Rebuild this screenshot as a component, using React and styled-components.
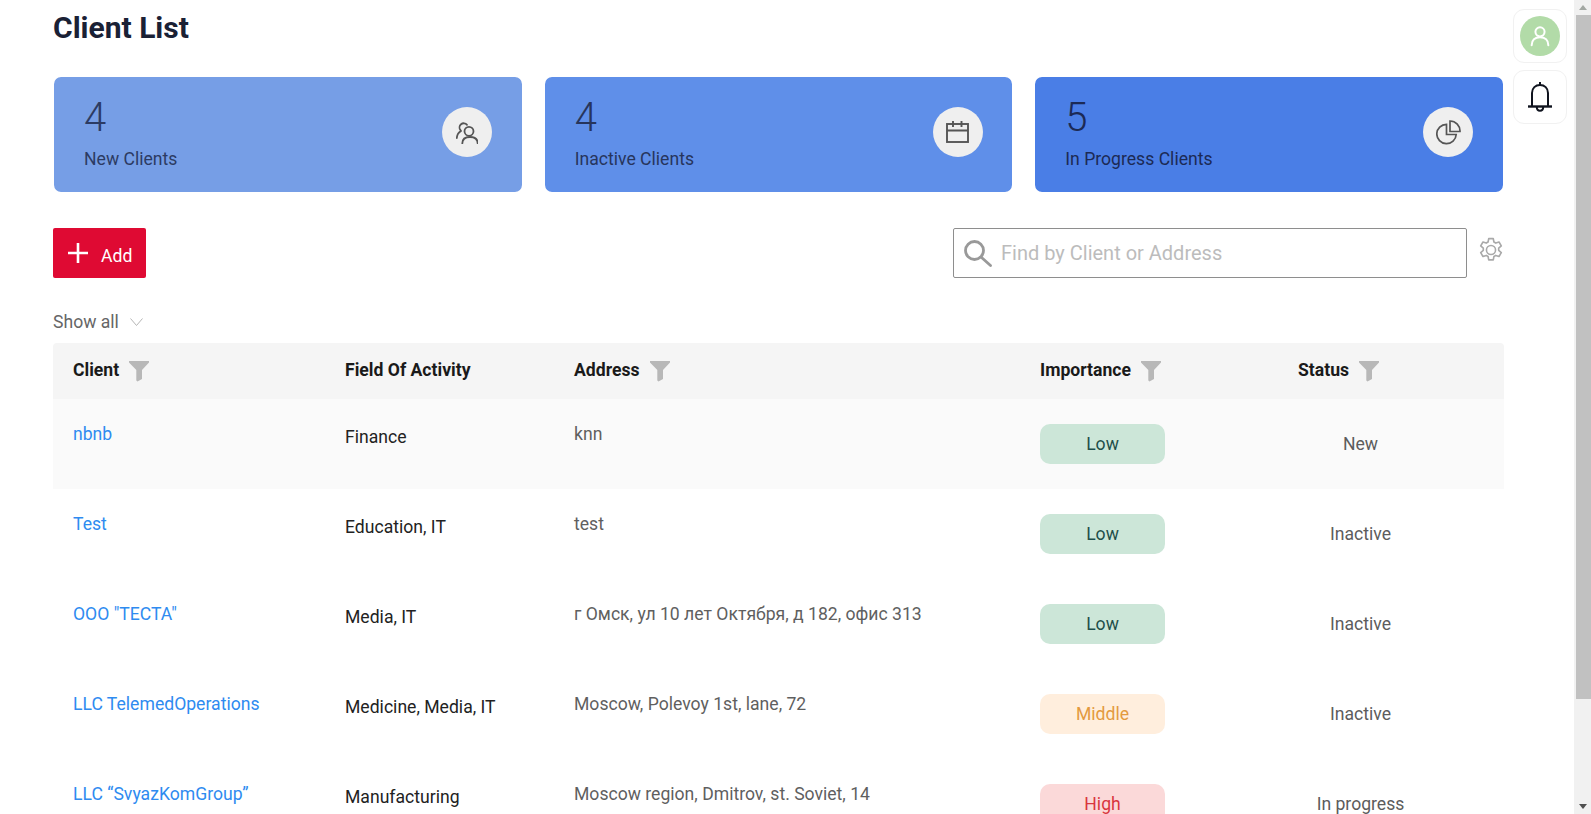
import React from 'react'
import styled, { createGlobalStyle } from 'styled-components'

const GlobalStyle = createGlobalStyle`
    html, body {
        margin: 0;
        background: #fff;
        font-family: Roboto, "Noto Sans CJK SC", sans-serif;
    }
`

const Shell = styled.div`
    position: relative;
    display: flex;
    height: 100vh;
    overflow: hidden;
`

const Page = styled.div`
    flex: 1;
    min-width: 0;
    padding: 10px 70px 0 53px;
`

const ScrollBar = styled.div`
    display: flex;
    flex-direction: column;
    width: 17px;
    background: #f1f1f1;
`

const ScrollArrow = styled.div`
    display: flex;
    align-items: center;
    justify-content: center;
    height: 15px;
    flex: none;
    &::before {
        content: '';
        border-left: 4.5px solid transparent;
        border-right: 4.5px solid transparent;
        border-${p => (p.$down ? 'top' : 'bottom')}: 5px solid ${p => (p.$down ? '#505050' : '#a3a8a3')};
    }
`

const ScrollTrack = styled.div`
    flex: 1;
    display: flex;
    justify-content: flex-end;
    align-items: flex-start;
`

const ScrollThumb = styled.div`
    width: 15px;
    height: 684px;
    background: #c1c1c1;
`

const Title = styled.h1`
    margin: 0;
    font-size: 30px;
    line-height: 36px;
    font-weight: 700;
    color: #1a2135;
`

const Cards = styled.div`
    display: grid;
    grid-template-columns: repeat(3, 1fr);
    gap: 21px;
    margin-top: 30px;
`

const Card = styled.div`
    display: flex;
    justify-content: space-between;
    align-items: center;
    height: 117px;
    padding: 0 29.5px 5px 30px;
    box-sizing: border-box;
    border: 1px solid rgba(255, 255, 255, 0.25);
    border-radius: 8px;
    background: ${p => p.$bg};
    background-clip: padding-box;
`

const CardText = styled.div`
    display: flex;
    flex-direction: column;
    color: ${p => p.$color};
`

const CardNumber = styled.div`
    font-size: 40px;
    line-height: 47px;
    font-weight: 300;
`

const CardLabel = styled.div`
    margin-top: 6px;
    font-size: 17.6px;
    line-height: 24px;
`

const CardIcon = styled.div`
    display: flex;
    align-items: center;
    justify-content: center;
    width: 50px;
    height: 50px;
    border-radius: 50%;
    background: #efefef;
    color: #555;
`

const Toolbar = styled.div`
    display: flex;
    justify-content: space-between;
    align-items: flex-start;
    margin-top: 35px;
`

const AddButton = styled.button`
    display: flex;
    align-items: center;
    gap: 13px;
    width: 93px;
    height: 50px;
    padding: 0 0 0 15px;
    border: 0;
    border-radius: 2px;
    background: #df0a33;
    color: #fff;
    font: 400 17.6px Roboto, sans-serif;
`

const AddLabel = styled.span`
    padding-top: 5px;
`

const SearchArea = styled.div`
    display: flex;
    align-items: flex-start;
    gap: 11px;
`

const SearchBox = styled.label`
    display: flex;
    align-items: center;
    gap: 9px;
    width: 514px;
    height: 50px;
    padding: 0 10px;
    box-sizing: border-box;
    border: 1px solid #8e8e8e;
    border-radius: 2px;
    color: #999;
`

const SearchInput = styled.input`
    flex: 1;
    border: 0;
    outline: 0;
    padding: 0;
    background: none;
    font: 400 20px Roboto, sans-serif;
    &::placeholder {
        color: #bcbcbc;
        opacity: 1;
    }
`

const GearIcon = styled.svg`
    margin-top: 9px;
    color: #a9a9a9;
`

const ShowAll = styled.div`
    display: flex;
    align-items: center;
    gap: 11px;
    margin-top: 34px;
    height: 20px;
    font-size: 17.6px;
    color: #666;
`

const Table = styled.div`
    margin-top: 11px;
`

const Row = styled.div`
    display: grid;
    grid-template-columns: 292px 229px 466px 258px 205px;
    height: 90px;
    background: ${p => p.$bg || '#fff'};
`

const HeadRow = styled(Row)`
    height: 56px;
    align-items: center;
    padding-bottom: 3px;
    box-sizing: border-box;
    background: #f5f5f5;
    border-radius: 4px 4px 0 0;
`

const HeadCell = styled.div`
    display: flex;
    align-items: center;
    gap: 10px;
    padding-left: ${p => p.$pad || 0}px;
    font-size: 17.6px;
    font-weight: 700;
    color: #1a1a1a;
`

const FunnelIcon = styled.svg`
    margin-top: 3px;
    flex: none;
`

const Cell = styled.div`
    padding-top: ${p => p.$top}px;
    padding-left: ${p => p.$pad || 0}px;
    font-size: 17.6px;
    line-height: 20px;
    color: ${p => p.$color};
`

const Badge = styled.div`
    width: 125px;
    height: 40px;
    margin-top: 25px;
    padding-bottom: 1px;
    box-sizing: border-box;
    border-radius: 10px;
    display: flex;
    align-items: center;
    justify-content: center;
    font-size: 17.6px;
    background: ${p => p.$bg};
    color: ${p => p.$color};
`

const Status = styled.div`
    width: 125px;
    padding-top: 35px;
    text-align: center;
    font-size: 17.6px;
    line-height: 20px;
    color: #5c5c5c;
`

const SideButtons = styled.div`
    position: absolute;
    top: 9px;
    left: 1513px;
    display: flex;
    flex-direction: column;
    gap: 7px;
`

const SideButton = styled.div`
    display: flex;
    align-items: center;
    justify-content: center;
    width: 54px;
    height: 54px;
    box-sizing: border-box;
    border: 1px solid #f1f1f1;
    border-radius: 11px;
    background: #fff;
`

const Avatar = styled.div`
    display: flex;
    align-items: center;
    justify-content: center;
    width: 40px;
    height: 40px;
    border-radius: 50%;
    background: #b2dba8;
    color: #fff;
`

const UsersIcon = () => (
    <svg width="22" height="23" viewBox="0 0 22 23" fill="none" stroke="currentColor" strokeWidth="1.800" strokeLinecap="round">
        <circle cx="13" cy="10.300" r="4.500" />
        <path d="M6.300 22.500C6.300 18.500 9 16 14 16s7.700 2.500 7.700 6.500" />
        <path d="M11 3.800A4.200 4.200 0 1 0 4.500 9.200" />
        <path d="M5 10C2.500 11.500 1 14 .8 17" />
    </svg>
)

const CalendarIcon = () => (
    <svg width="23" height="22" viewBox="0 0 23 22" fill="none" stroke="currentColor" strokeWidth="1.900">
        <rect x="1" y="3" width="21" height="18" />
        <path d="M1 9.500h21M7 0v6M15.500 0v6" />
    </svg>
)

const PieIcon = () => (
    <svg width="25" height="25" viewBox="0 0 25 25" fill="none" stroke="currentColor" strokeWidth="1.700">
        <path d="M10.500 4.300a9.700 9.700 0 1 0 9.700 10.200h-9.700z" />
        <path d="M14 1a10 10 0 0 1 10 10.500H14z" />
    </svg>
)

const PlusIcon = () => (
    <svg width="20" height="20" viewBox="0 0 20 20" stroke="currentColor" strokeWidth="2.600">
        <path d="M0 10h20M10 0v20" />
    </svg>
)

const SearchIcon = () => (
    <svg width="28" height="27" viewBox="0 0 28 27" fill="none" stroke="currentColor" strokeWidth="2.800" strokeLinecap="round">
        <circle cx="10.500" cy="10.500" r="9" />
        <path d="M17 17l9.500 8.500" />
    </svg>
)

const Gear = () => (
    <GearIcon width="26" height="26" viewBox="0 0 24 24" fill="none" stroke="currentColor" strokeWidth="1.500" strokeLinejoin="round">
        <circle cx="12" cy="12" r="4.200" />
        <path d="M9.900 1.500h4.200l.6 3.100 1.700 1 3-1 2.100 3.600-2.400 2.100v2l2.400 2.100-2.100 3.600-3-1-1.700 1-.6 3.100H9.900l-.6-3.100-1.700-1-3 1-2.100-3.600 2.400-2.100v-2L2.500 8.200l2.100-3.600 3 1 1.700-1z" />
    </GearIcon>
)

const Chevron = () => (
    <svg width="13" height="8" viewBox="0 0 13 8" fill="none" stroke="#b5b5b5" strokeWidth="1">
        <path d="M.5.500l6 7 6-7" />
    </svg>
)

const Funnel = () => (
    <FunnelIcon width="20" height="21" viewBox="0 0 20 21" fill="#b8b8b8">
        <path d="M0 0h20v1.500L13 9v9l-4.500 2.500-1.200-1V9L0 1.500z" />
    </FunnelIcon>
)

const UserIcon = () => (
    <svg width="20" height="22" viewBox="0 0 24 26" fill="none" stroke="currentColor" strokeWidth="2.400" strokeLinecap="round">
        <circle cx="12" cy="8" r="5.500" />
        <path d="M2 24c0-6 4-9.500 10-9.500S22 18 22 24" />
    </svg>
)

const BellIcon = () => (
    <svg width="24" height="30" viewBox="0 0 24 30" fill="none" stroke="#10141f" strokeWidth="2" strokeLinejoin="round">
        <path d="M12 0v3" />
        <path d="M4 24V11c0-5 3.500-8 8-8s8 3 8 8v13" />
        <path d="M0 24.500h24" strokeWidth="2.400" />
        <path d="M8.800 25c0 2.600 1.400 3.800 3.200 3.800s3.200-1.200 3.200-3.800" />
    </svg>
)

const cards = [
    { number: 4, label: 'New Clients', bg: '#769ee6', color: '#2c3b63', icon: <UsersIcon /> },
    { number: 4, label: 'Inactive Clients', bg: '#5f8fe9', color: '#27355c', icon: <CalendarIcon /> },
    { number: 5, label: 'In Progress Clients', bg: '#4a7ee6', color: '#1c2a55', icon: <PieIcon /> },
]

const levels = {
    Low: { bg: '#cce6d8', color: '#1f4f4a' },
    Middle: { bg: '#ffeedd', color: '#e39a3f' },
    High: { bg: '#fbd9d9', color: '#d9363e' },
}

const clients = [
    { name: 'nbnb', field: 'Finance', address: 'knn', level: 'Low', status: 'New', bg: '#fafafa' },
    { name: 'Test', field: 'Education, IT', address: 'test', level: 'Low', status: 'Inactive' },
    { name: 'ООО "ТЕСТА"', field: 'Media, IT', address: 'г Омск, ул 10 лет Октября, д 182, офис 313', level: 'Low', status: 'Inactive' },
    { name: 'LLC TelemedOperations', field: 'Medicine, Media, IT', address: 'Moscow, Polevoy 1st, lane, 72', level: 'Middle', status: 'Inactive' },
    { name: 'LLC “SvyazKomGroup”', field: 'Manufacturing', address: 'Moscow region, Dmitrov, st. Soviet, 14', level: 'High', status: 'In progress' },
]

const App = () => {
    return (
        <Shell>
            <GlobalStyle />
            <Page>
                <Title>Client List</Title>

                <Cards>
                    {cards.map(c => (
                        <Card key={c.label} $bg={c.bg}>
                            <CardText $color={c.color}>
                                <CardNumber>{c.number}</CardNumber>
                                <CardLabel>{c.label}</CardLabel>
                            </CardText>
                            <CardIcon>{c.icon}</CardIcon>
                        </Card>
                    ))}
                </Cards>

                <Toolbar>
                    <AddButton><PlusIcon /><AddLabel>Add</AddLabel></AddButton>
                    <SearchArea>
                        <SearchBox>
                            <SearchIcon />
                            <SearchInput placeholder="Find by Client or Address" />
                        </SearchBox>
                        <Gear />
                    </SearchArea>
                </Toolbar>

                <ShowAll>Show all <Chevron /></ShowAll>

                <Table>
                    <HeadRow>
                        <HeadCell $pad={20}>Client <Funnel /></HeadCell>
                        <HeadCell>Field Of Activity</HeadCell>
                        <HeadCell>Address <Funnel /></HeadCell>
                        <HeadCell>Importance <Funnel /></HeadCell>
                        <HeadCell>Status <Funnel /></HeadCell>
                    </HeadRow>
                    {clients.map(c => (
                        <Row key={c.name} $bg={c.bg}>
                            <Cell $top={25} $pad={20} $color="#2e8bf0">{c.name}</Cell>
                            <Cell $top={28} $color="#222">{c.field}</Cell>
                            <Cell $top={25} $color="#5f5f5f">{c.address}</Cell>
                            <div>
                                <Badge $bg={levels[c.level].bg} $color={levels[c.level].color}>{c.level}</Badge>
                            </div>
                            <Status>{c.status}</Status>
                        </Row>
                    ))}
                </Table>
            </Page>

            <ScrollBar>
                <ScrollArrow />
                <ScrollTrack><ScrollThumb /></ScrollTrack>
                <ScrollArrow $down />
            </ScrollBar>

            <SideButtons>
                <SideButton><Avatar><UserIcon /></Avatar></SideButton>
                <SideButton><BellIcon /></SideButton>
            </SideButtons>
        </Shell>
    )
}

export default App
